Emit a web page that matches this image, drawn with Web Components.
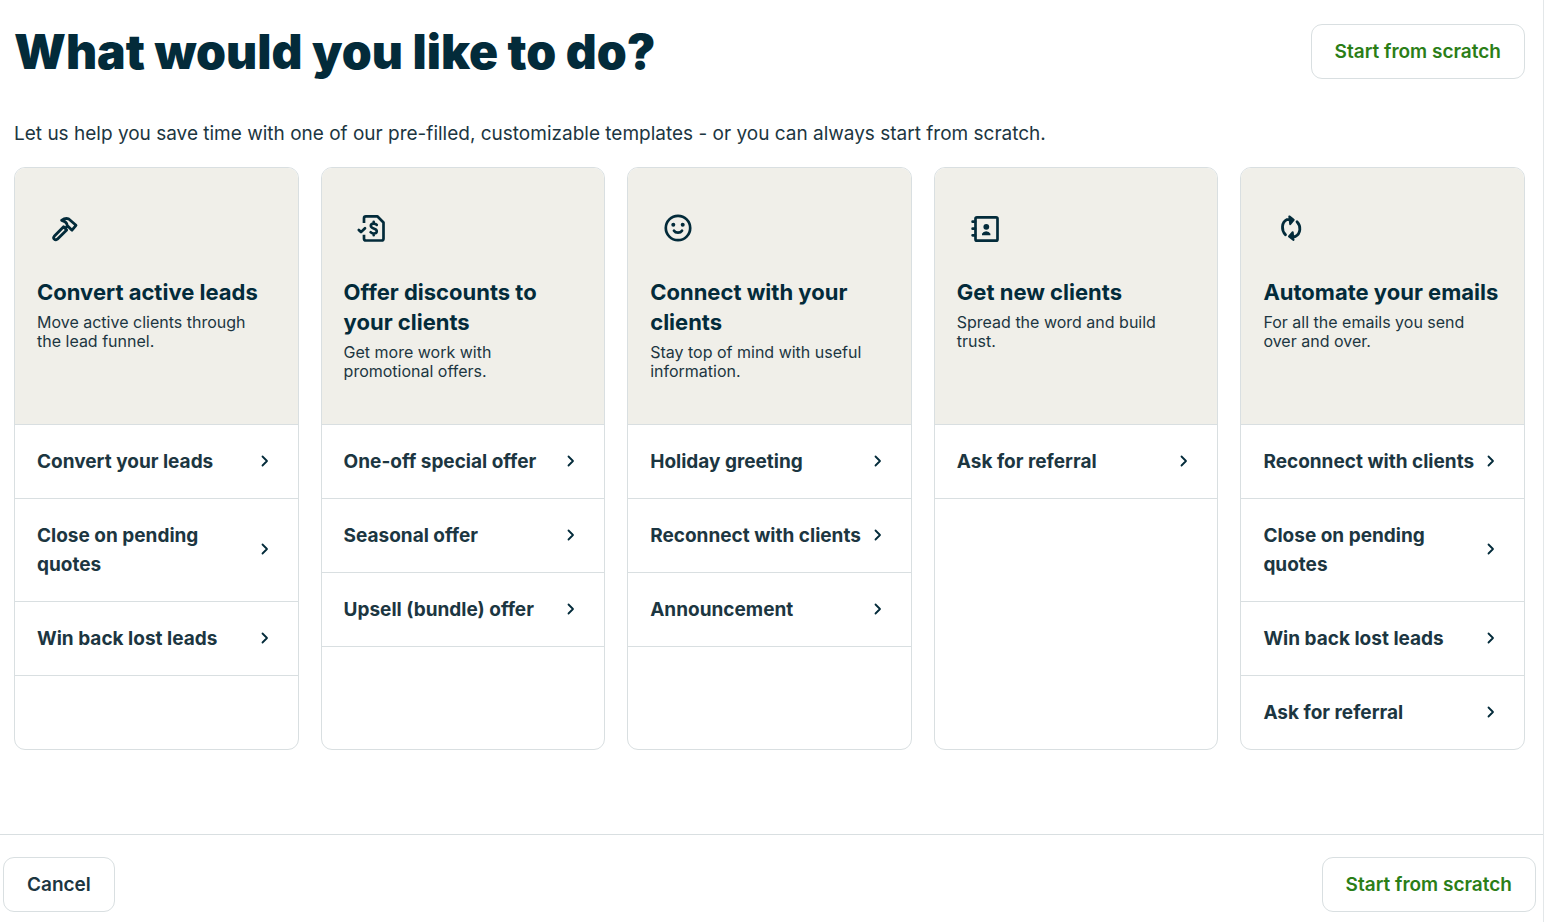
<!DOCTYPE html>
<html lang="en">
<head>
<meta charset="utf-8">
<title>What would you like to do?</title>
<style>
  body { margin: 0; background: #fff; font-family: Inter, "Open Sans", sans-serif; color: #1c3641; }
</style>
</head>
<body>
<template-picker></template-picker>
<script>
const ICONS = {
  hammer: `<svg viewBox="0 0 32 32" fill="none" stroke="currentColor" stroke-width="2.8" stroke-linejoin="round" stroke-linecap="round"><path d="M5.200 24.300 14.600 14.800 17.700 17.900 8.300 27.200Q6.600 28.400 5.200 27Q4 25.700 5.200 24.300ZM16.200 16.300 18.300 14.200M12.600 8.400Q16 5.800 19.500 6.800L27 13.300 23 18.200 18.200 13.400Q17.800 9.800 12.600 8.400Z"/></svg>`,
  discount: `<svg viewBox="0 0 32 32" fill="none" stroke="currentColor" stroke-width="2.700" stroke-linejoin="round" stroke-linecap="butt"><path d="M8 11V6.200Q8 4.300 9.900 4.300H21.300L27.500 10.500V26.500Q27.500 28.500 25.600 28.500H9.900Q8 28.500 8 26.500V22.800"/><path stroke-linecap="round" d="M2.800 18 5 20.100 9 16.200"/><path stroke-width="2.600" stroke-linecap="round" d="M20.800 12.900Q19.700 11.600 17.700 11.600Q14.800 11.600 14.800 13.800Q14.800 15.600 17.700 16.400Q20.800 17.200 20.800 19.300Q20.800 21.500 17.700 21.500Q15.700 21.500 14.600 20.200M17.700 9.700V11.300M17.700 21.700V23.300"/></svg>`,
  smile: `<svg viewBox="0 0 32 32" fill="none" stroke="currentColor" stroke-width="2.700" stroke-linecap="round"><circle cx="16" cy="16" r="12.200"/><circle cx="11.300" cy="12.800" r="2" fill="currentColor" stroke="none"/><circle cx="20.700" cy="12.800" r="2" fill="currentColor" stroke="none"/><path d="M12 18.700Q13.300 20.700 16 20.700T20 18.700"/></svg>`,
  contacts: `<svg viewBox="0 0 32 32" fill="none" stroke="currentColor" stroke-width="2.700" stroke-linejoin="round" stroke-linecap="round"><rect x="6.500" y="5.300" width="22" height="23.400" rx="1.500"/><path d="M3.600 9.700H6M3.600 16.700H6M3.600 23.300H6"/><circle cx="17.300" cy="14.800" r="2.900" fill="currentColor" stroke="none"/><path stroke="none" fill="currentColor" d="M13 23.200V21.800Q14.200 19.300 17.200 19.300T21.400 21.800V23.200Z"/></svg>`,
  refresh: `<svg viewBox="0 0 32 32" fill="none" stroke="currentColor" stroke-width="2.800" stroke-linecap="round" stroke-linejoin="round"><path d="M10.500 22.700C6.200 18.300 6.300 10.500 12 7.600L16.500 7.700M22 9.800C26.200 14.100 25.900 21.700 20.300 24.600L15.800 24.500"/><path fill="currentColor" stroke-width="2" d="M14.300 4.400 18.700 7.900 15.200 12.200ZM17.700 20.200 14 24.500 18.500 27.900Z"/></svg>`
};

const CARDS = [
  { icon: "hammer", title: "Convert active leads", text: "Move active clients through the lead funnel.",
    items: ["Convert your leads", "Close on pending quotes", "Win back lost leads"] },
  { icon: "discount", title: "Offer discounts to your clients", text: "Get more work with promotional offers.",
    items: ["One-off special offer", "Seasonal offer", "Upsell (bundle) offer"] },
  { icon: "smile", title: "Connect with your clients", text: "Stay top of mind with useful information.",
    items: ["Holiday greeting", "Reconnect with clients", "Announcement"] },
  { icon: "contacts", title: "Get new clients", text: "Spread the word and build trust.",
    items: ["Ask for referral"] },
  { icon: "refresh", title: "Automate your emails", text: "For all the emails you send over and over.",
    items: ["Reconnect with clients", "Close on pending quotes", "Win back lost leads", "Ask for referral"] }
];

class ActionButton extends HTMLElement {
  constructor() {
    super();
    this.attachShadow({ mode: "open" }).innerHTML = `
      <style>
        :host { display: block; flex: none; color: #2b7e17; }
        :host([subtle]) { color: #1c3641; }
        button { display: block; padding: 12px 23px; border: 1px solid #d9dfe1;
          border-radius: 11px; background: #fff; color: inherit; font: 600 19px/29px Inter, sans-serif; white-space: nowrap; cursor: pointer; }
      </style>
      <button type="button"><slot></slot></button>`;
  }
}

class TemplateLink extends HTMLElement {
  constructor() {
    super();
    this.attachShadow({ mode: "open" }).innerHTML = `
      <style>
        :host { display: block; }
        :host(:not([flush])) { border-bottom: 1px solid #d9dfe1; }
        a { display: flex; align-items: center; padding: 22px; color: #1c3641; text-decoration: none;
          font: 700 19px/29px Inter, sans-serif; }
        span { flex: 1; min-width: 0; }
        svg { flex: none; width: 24px; height: 24px; color: #032b3a; }
      </style>
      <a href="#"><span><slot></slot></span>
        <svg viewBox="0 0 24 24" fill="none" stroke="currentColor" stroke-width="1.800" stroke-linecap="round" stroke-linejoin="round" aria-hidden="true"><path d="M10.500 6.500 15 11 10.500 15.500"/></svg></a>`;
  }
}

class TemplateCard extends HTMLElement {
  connectedCallback() {
    const root = this.attachShadow({ mode: "open" });
    root.innerHTML = `
      <style>
        :host { display: flex; flex-direction: column; min-width: 0; border: 1px solid #d9dfe1; border-radius: 11px; overflow: hidden; background: #fff; }
        header { box-sizing: border-box; min-height: 257px; padding: 44px 22px 22px; background: #f0efe9; border-bottom: 1px solid #d9dfe1; }
        svg { display: block; width: 32px; height: 32px; margin: 0 12px 33px; color: #032b3a; }
        h2 { margin: 0 0 6px; font: 700 22px/30px Inter, sans-serif; color: #032b3a; }
        p { margin: 0; padding-right: 22px; font: 400 16px/19px Inter, sans-serif; color: #1c3641; }
      </style>
      <header>${ICONS[this.getAttribute("icon")]}<h2><slot name="title"></slot></h2><p><slot name="text"></slot></p></header>
      <nav><slot></slot></nav>`;
  }
}

class TemplatePicker extends HTMLElement {
  constructor() {
    super();
    this.attachShadow({ mode: "open" }).innerHTML = `
      <style>
        :host { display: flex; flex-direction: column; box-sizing: border-box; min-height: 100vh; border-right: 1px solid #e3e7e9; }
        main { padding: 24px 18px 84px 14px; }
        .top { display: flex; justify-content: space-between; align-items: center; }
        h1 { margin: 0; font: 900 48px/55px Inter, sans-serif; color: #032b3a; }
        .intro { margin: 40px 0 19px; font: 400 19px/29px Inter, sans-serif; }
        .cards { display: grid; grid-template-columns: repeat(5, minmax(0, 1fr)); gap: 22px; }
        footer { display: flex; justify-content: space-between; padding: 22px 7px 10px 3px; border-top: 1px solid #d9dfe1; }
      </style>
      <main>
        <div class="top"><h1>What would you like to do?</h1><action-button>Start from scratch</action-button></div>
        <p class="intro">Let us help you save time with one of our pre-filled, customizable templates - or you can always start from scratch.</p>
        <div class="cards">${CARDS.map(c => `
          <template-card icon="${c.icon}"><span slot="title">${c.title}</span><span slot="text">${c.text}</span>${c.items.map((t, i) => `<template-link${i === 3 ? " flush" : ""}>${t}</template-link>`).join("")}</template-card>`).join("")}
        </div>
      </main>
      <footer><action-button subtle>Cancel</action-button><action-button>Start from scratch</action-button></footer>`;
  }
}

customElements.define("action-button", ActionButton);
customElements.define("template-link", TemplateLink);
customElements.define("template-card", TemplateCard);
customElements.define("template-picker", TemplatePicker);
</script>
</body>
</html>
